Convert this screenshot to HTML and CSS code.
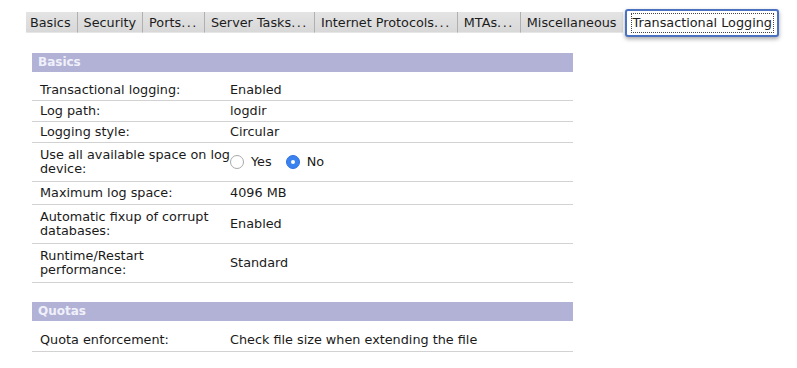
FILE: index.html
```html
<!DOCTYPE html>
<html>
<head>
<meta charset="utf-8">
<link rel="stylesheet" href="styles.css">
</head>
<body>
<div class="tabs">
  <div class="tab">Basics</div>
  <div class="tab">Security</div>
  <div class="tab">Ports<span class="ell">...</span></div>
  <div class="tab">Server Tasks<span class="ell">...</span></div>
  <div class="tab">Internet Protocols<span class="ell">...</span></div>
  <div class="tab">MTAs<span class="ell">...</span></div>
  <div class="tab">Miscellaneous</div>
  <div class="tab active"><span class="focus">Transactional Logging</span></div>
</div>

<div class="content">
  <div class="section">
    <div class="section-head">Basics</div>
    <div class="rows">
      <div class="row"><div class="label">Transactional logging:</div><div class="value">Enabled</div></div>
      <div class="row"><div class="label">Log path:</div><div class="value">logdir</div></div>
      <div class="row"><div class="label">Logging style:</div><div class="value">Circular</div></div>
      <div class="row tall"><div class="label">Use all available space on log device:</div>
        <div class="value radios">
          <span class="radio"></span><span class="rlabel">Yes</span>
          <span class="radio on"></span><span class="rlabel">No</span>
        </div>
      </div>
      <div class="row mid"><div class="label">Maximum log space:</div><div class="value">4096 MB</div></div>
      <div class="row tall"><div class="label">Automatic fixup of corrupt databases:</div><div class="value">Enabled</div></div>
      <div class="row tall"><div class="label">Runtime/Restart performance:</div><div class="value">Standard</div></div>
    </div>
  </div>

  <div class="section">
    <div class="section-head">Quotas</div>
    <div class="rows">
      <div class="row mid"><div class="label">Quota enforcement:</div><div class="value">Check file size when extending the file</div></div>
    </div>
  </div>
</div>
</body>
</html>
```
FILE: styles.css
```css
html, body {
  margin: 0;
  padding: 0;
  background: #ffffff;
}
body {
  font-family: "DejaVu Sans", Verdana, sans-serif;
  font-size: 12.8px;
  color: #1a1a1a;
  width: 797px;
  height: 368px;
  overflow: hidden;
}
.tabs {
  display: flex;
  align-items: center;
  padding: 12px 0 0 26px;
  height: 21px;
}
.tab {
  height: 21px;
  line-height: 21px;
  padding: 0 6px;
  background: linear-gradient(#e4e4e4, #d8d8d8);
  border-left: 1px solid #b0b0b0;
  border-bottom: 1px solid #e6e6e6;
  box-sizing: border-box;
  color: #1c1c1c;
  white-space: nowrap;
}
.tab:first-child {
  border-left: none;
  padding-left: 4px;
}
.ell {
  letter-spacing: 1.5px;
}
.tab.active {
  position: relative;
  z-index: 1;
  margin-left: 2px;
  height: 28px;
  line-height: 18px;
  padding: 3px 4px 3px 5px;
  background: #ffffff;
  border: 2px solid #4a72c0;
  border-radius: 3px;
  box-shadow: 0 2px 4px rgba(0, 0, 0, 0.35);
}
.focus {
  display: block;
  padding: 0 1px;
  outline: 1px dotted #444;
}
.content {
  margin: 20px 0 0 32px;
  width: 541px;
  display: flex;
  flex-direction: column;
  gap: 19px;
}
.section-head {
  height: 19px;
  line-height: 19px;
  background: #b2b2d6;
  color: #f0f0fa;
  font-weight: bold;
  font-size: 12px;
  padding-left: 6px;
}
.rows {
  padding-top: 8px;
}
.row {
  display: grid;
  grid-template-columns: 198px 1fr;
  align-items: center;
  border-bottom: 1px solid #d2d2d2;
  padding: 3px 0;
  line-height: 14px;
}
.row.mid {
  padding: 4px 0;
}
.row.tall {
  padding: 5px 0 5px;
}
.label {
  padding-left: 8px;
}
.radios {
  display: flex;
  align-items: center;
}
.radio {
  width: 14px;
  height: 14px;
  border-radius: 50%;
  border: 1px solid #a8a8a8;
  background: #ffffff;
  box-sizing: border-box;
  margin-right: 7px;
}
.radio.on {
  background: #3a82f0;
  border-color: #2f72de;
  position: relative;
  margin-left: 14px;
}
.radio.on::after {
  content: "";
  position: absolute;
  left: 4px;
  top: 4px;
  width: 4px;
  height: 4px;
  border-radius: 50%;
  background: #ffffff;
}
.rlabel {
  font-weight: normal;
}
```
